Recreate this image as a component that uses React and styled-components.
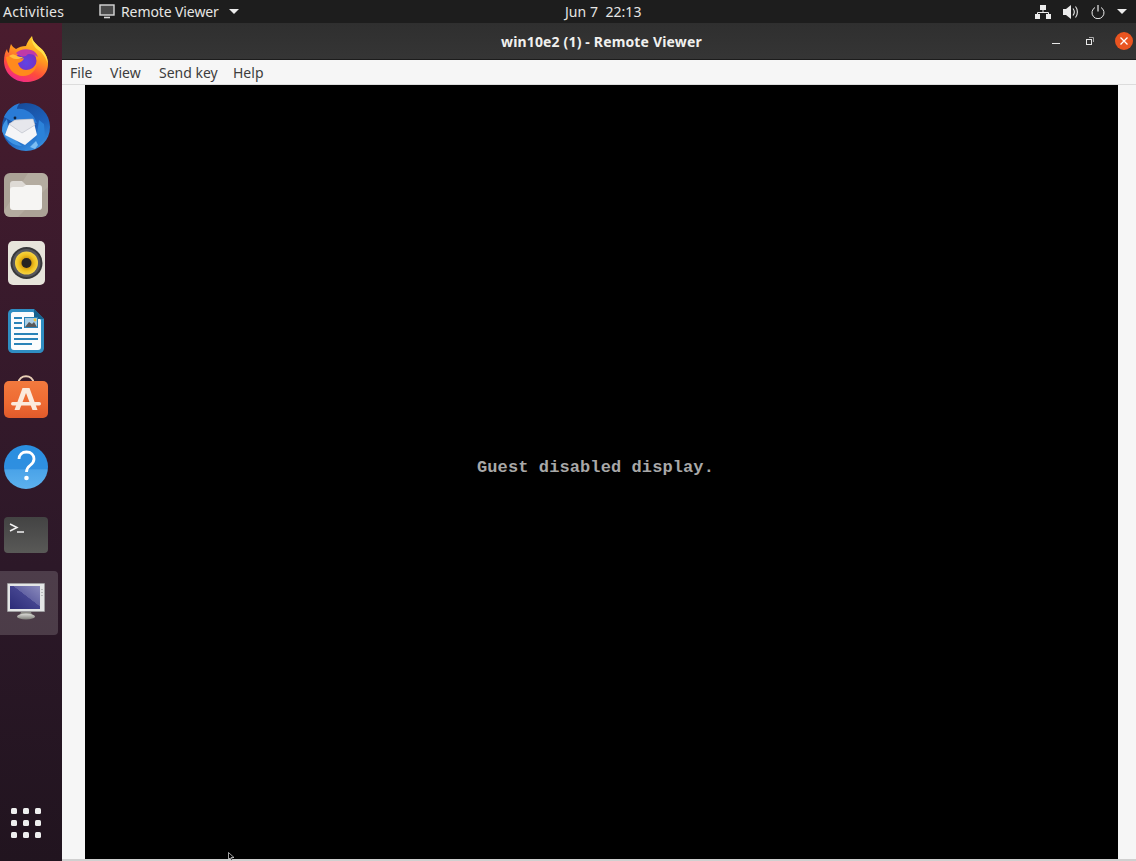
import React from 'react'
import styled, { createGlobalStyle } from 'styled-components'

const Global = createGlobalStyle`
  html, body { margin: 0; padding: 0; background: #000; }
  body { width: 1136px; height: 861px; overflow: hidden; font-family: "Noto Sans", "Open Sans", sans-serif; }
`

const Firefox = () => (
  <svg width="44" height="47" viewBox="0 0 44 47">
    <defs>
      <linearGradient id="ffBody" x1="0.75" y1="0" x2="0.3" y2="1">
        <stop offset="0" stopColor="#ffd52e" />
        <stop offset="0.4" stopColor="#ff9a1f" />
        <stop offset="0.72" stopColor="#ff4a3d" />
        <stop offset="1" stopColor="#f0278f" />
      </linearGradient>
      <radialGradient id="ffGlobe" cx="0.5" cy="0.6" r="0.6">
        <stop offset="0" stopColor="#5f45e4" />
        <stop offset="1" stopColor="#7b2cc0" />
      </radialGradient>
    </defs>
    <path d="M22 47C10 47 0 38 0 26c0-5 1-9 3-12 0 2 1 3 2 4 0-3 1-6 2-9 1 2 3 4 5 5 3-2 6-3 10-3 1-3 3-7 6-10 0 4 2 6 6 10 6 4 10 11 10 18 0 11-10 18-22 18z" fill="url(#ffBody)" />
    <path d="M28 1c0 4 2 6 6 10 6 4 10 11 10 18-2-6-5-11-10-14-4-3-7-8-6-14z" fill="#ffe14a" />
    <circle cx="22" cy="26" r="10.500" fill="url(#ffGlobe)" />
    <path d="M12 18c3-3 9-5 15-3 4 1 6 4 7 7-3-2-6-3-9-3-2 0-2 1-3 2-4 1-7 0-10-3z" fill="#c03aa8" />
    <path d="M2 22c3-1 6-1 9 1 3 1 7 1 9 0-1 3-3 4-6 5 1 4 4 7 8 7 5 0 9-3 11-8 0 8-6 14-14 14-9 0-16-8-17-19z" fill="#ff8a1c" />
    <path d="M5 21c3-2 5-2 8 0 2 1 4 1 6 1-2 2-4 2-7 2-3 0-5-2-7-3z" fill="#ffbe3c" />
  </svg>
)

const Thunderbird = () => (
  <svg width="48" height="48" viewBox="0 0 48 48">
    <defs>
      <linearGradient id="tbBody" x1="0.3" y1="0" x2="0.8" y2="1">
        <stop offset="0" stopColor="#174a98" />
        <stop offset="0.55" stopColor="#1d62bd" />
        <stop offset="1" stopColor="#3a96e6" />
      </linearGradient>
    </defs>
    <circle cx="24" cy="24" r="24" fill="url(#tbBody)" />
    <path d="M2 14C5 7 11 2 18 0c-2 2-3 4-3 6 6-1 13 2 17 8l3 6-26-2z" fill="#2a7bd6" />
    <path d="M0 28c0-5 2-9 5-12 1 5 1 10 1 14l14 13c-8 0-17-6-20-15z" fill="#3f94e4" />
    <path d="M7 21l6-4 18-1 4 16-12 10L3 32z" fill="#f5f5f7" />
    <path d="M7 21l13 9 13-8-2-6-18 1z" fill="#e6e7ec" stroke="#b5b8c4" strokeWidth="0.600" />
    <path d="M37 17l5 4 1 12-6 9-6 3 3-7z" fill="#2b82da" />
    <path d="M28 44l6-6 2 4-3 4z" fill="#7cbdf2" />
    <circle cx="13" cy="15" r="1.400" fill="#10223f" />
  </svg>
)

const Files = () => (
  <svg width="44" height="44" viewBox="0 0 44 44">
    <rect x="0" y="0" width="44" height="44" rx="6" fill="#aba296" />
    <path d="M24 0h14c3 0 6 3 6 6v8L14 44H6c-3 0-6-3-6-6z" fill="#bdb5aa" opacity="0.5" />
    <path d="M6 11c0-2 1-3 3-3h9l5 5v5H6z" fill="#dedad5" />
    <path d="M6 17c0-2 1-3 3-3h10l3-2h13c2 0 3 1 3 3v19c0 2-1 3-3 3H9c-2 0-3-1-3-3z" fill="#f6f5f3" />
  </svg>
)

const Rhythmbox = () => (
  <svg width="37" height="44" viewBox="0 0 37 44">
    <defs>
      <radialGradient id="rbCone" cx="0.5" cy="0.5" r="0.5">
        <stop offset="0.35" stopColor="#c98f10" />
        <stop offset="0.7" stopColor="#f1c21f" />
        <stop offset="1" stopColor="#f6d445" />
      </radialGradient>
    </defs>
    <rect x="0" y="0" width="37" height="44" rx="5" fill="#e7e4db" />
    <circle cx="18.500" cy="22" r="16" fill="#38383a" />
    <circle cx="18.500" cy="22" r="14" fill="#58585c" />
    <circle cx="18.500" cy="22" r="11.500" fill="url(#rbCone)" />
    <circle cx="18.500" cy="22" r="5" fill="#262322" />
  </svg>
)

const Writer = () => (
  <svg width="36" height="44" viewBox="0 0 36 44">
    <path d="M5 0h21l10 10v29c0 3-2 5-5 5H5c-3 0-5-2-5-5V5c0-3 2-5 5-5z" fill="#2f8dc2" />
    <path d="M5 3h20l8 8v27c0 2-1 3-3 3H6c-2 0-3-1-3-3V5c0-1 1-2 2-2z" fill="#fbfcfd" />
    <path d="M26 0l10 10h-10z" fill="#17628f" />
    <path d="M6 8h8v2H6zM6 13h8v2H6zM6 18h8v2H6zM6 24h24v2H6zM6 29h24v2H6zM6 34h18v2H6z" fill="#2a83b8" />
    <rect x="16" y="8" width="14" height="11" fill="#2a83b8" />
    <rect x="17" y="9" width="12" height="9" fill="#a9cfe6" />
    <path d="M17 18l4-5 3 2 2-2 3 5z" fill="#5a5a5a" />
    <circle cx="27" cy="11" r="1.400" fill="#f0c33c" />
  </svg>
)

const Software = () => (
  <svg width="44" height="43" viewBox="0 0 44 43">
    <defs>
      <linearGradient id="swBag" x1="0" y1="0" x2="0" y2="1">
        <stop offset="0" stopColor="#f27a3e" />
        <stop offset="0.6" stopColor="#ee6a32" />
        <stop offset="1" stopColor="#e05a2b" />
      </linearGradient>
    </defs>
    <path d="M14.500 8c0-9 15-9 15 0" fill="none" stroke="#e9cfb6" strokeWidth="1.800" />
    <rect x="0" y="6" width="44" height="37" rx="5" fill="url(#swBag)" />
    <path d="M18.500 13h7l8 22h-5l-6.500-17-6.500 17h-5z" fill="#fbeadd" />
    <rect x="7" y="27" width="30" height="3.500" rx="1.700" fill="#fbeadd" />
  </svg>
)

const Help = () => (
  <svg width="44" height="44" viewBox="0 0 44 44">
    <defs>
      <linearGradient id="hpBall" x1="0" y1="0" x2="0" y2="1">
        <stop offset="0" stopColor="#2a8fe0" />
        <stop offset="0.55" stopColor="#2f8fe0" />
        <stop offset="0.56" stopColor="#4aa3e8" />
        <stop offset="1" stopColor="#5db1ee" />
      </linearGradient>
    </defs>
    <circle cx="22" cy="22" r="22" fill="url(#hpBall)" />
    <path d="M15 14c0-4 3-7 7.500-7S30 10 30 14c0 3-2 5-4 6.500-2 1.500-3.500 3-3.500 6.500" fill="none" stroke="#fff" strokeWidth="2.800" />
    <circle cx="22.500" cy="33" r="2.300" fill="#fff" />
  </svg>
)

const Terminal = () => (
  <svg width="44" height="36" viewBox="0 0 44 36">
    <defs>
      <linearGradient id="tmBg" x1="0" y1="0" x2="0" y2="1">
        <stop offset="0" stopColor="#434343" />
        <stop offset="1" stopColor="#595957" />
      </linearGradient>
    </defs>
    <rect x="0" y="0" width="44" height="36" rx="4" fill="url(#tmBg)" />
    <path d="M6 7l7 3.500-7 3.500" fill="none" stroke="#f2f2f2" strokeWidth="1.500" />
    <path d="M13 15h7" stroke="#f2f2f2" strokeWidth="1.500" />
  </svg>
)

const Monitor = () => (
  <svg width="38" height="37" viewBox="0 0 38 37">
    <defs>
      <linearGradient id="mnScreen" x1="0" y1="1" x2="1" y2="0">
        <stop offset="0" stopColor="#2c2c78" />
        <stop offset="0.55" stopColor="#44448f" />
        <stop offset="0.56" stopColor="#6464a4" />
        <stop offset="1" stopColor="#8a8abc" />
      </linearGradient>
      <linearGradient id="mnBase" x1="0" y1="0" x2="0" y2="1">
        <stop offset="0" stopColor="#dcdcd8" />
        <stop offset="1" stopColor="#7e7e78" />
      </linearGradient>
    </defs>
    <path d="M0.500 0.500h37v28H0.500z" fill="#e4e6e6" stroke="#a2a6a6" strokeWidth="0.600" />
    <rect x="3" y="3" width="30" height="23" fill="url(#mnScreen)" />
    <path d="M35 6v1M35 9v1M35 12v1" stroke="#8e9292" />
    <path d="M14 29h10l1 3H13z" fill="#8a8a84" />
    <ellipse cx="19" cy="33.500" rx="9" ry="3" fill="url(#mnBase)" />
  </svg>
)

const dockItems = [
  { id: 'firefox', Icon: Firefox, lift: 1 },
  { id: 'thunderbird', Icon: Thunderbird },
  { id: 'files', Icon: Files },
  { id: 'rhythmbox', Icon: Rhythmbox },
  { id: 'writer', Icon: Writer },
  { id: 'software', Icon: Software, lift: 3 },
  { id: 'help', Icon: Help },
  { id: 'terminal', Icon: Terminal },
  { id: 'viewer', Icon: Monitor, active: true, lift: 2 },
]

function App() {
  return (
    <>
      <Global />
      <Desktop>
        <TopBar>
          <Activities>Activities</Activities>
          <AppMenu>
            <svg width="16" height="15" viewBox="0 0 16 15">
              <rect x="1" y="1" width="14" height="10" fill="#4a4a4a" stroke="#d8d8d8" strokeWidth="1.400" />
              <path d="M5 13.500h6" stroke="#d8d8d8" strokeWidth="1.600" />
            </svg>
            <span>Remote Viewer</span>
            <Caret $left={4} />
          </AppMenu>
          <Clock>Jun 7&nbsp;&nbsp;22:13</Clock>
          <Tray>
            <svg width="16" height="14" viewBox="0 0 16 14">
              <path d="M5 0h6v5H5zM0 9h5v5H0zM11 9h5v5h-5z" fill="#ececec" />
              <path d="M8 5v2.500M2.500 9V7.500h11V9" fill="none" stroke="#ececec" />
            </svg>
            <svg width="16" height="14" viewBox="0 0 16 14">
              <path d="M0 4h3l5-4v14l-5-4H0z" fill="#ececec" />
              <path d="M10 3.500c1.500 2 1.500 5 0 7M12.500 1.500c2.500 3 2.500 8 0 11" fill="none" stroke="#ececec" strokeWidth="1.100" />
            </svg>
            <svg width="14" height="14" viewBox="0 0 14 14">
              <path d="M7 0v6.500" stroke="#ececec" strokeWidth="1.200" />
              <path d="M4 2.500a6 6 0 1 0 6 0" fill="none" stroke="#ececec" strokeWidth="1" />
            </svg>
            <Caret />
          </Tray>
        </TopBar>
        <Workspace>
          <Dock>
            <DockList>
              {dockItems.map(({ id, Icon, active, lift }) => (
                <DockItem key={id} $active={active} $lift={lift}>
                  <Icon />
                </DockItem>
              ))}
            </DockList>
            <AppGrid>
              {Array.from({ length: 9 }).map((_, i) => <span key={i} />)}
            </AppGrid>
          </Dock>
          <Window>
            <TitleBar>
              <Title>win10e2 (1) - Remote Viewer</Title>
              <WindowButtons>
                <svg width="10" height="10" viewBox="0 0 10 10">
                  <path d="M1 7.500h8" stroke="#e8e8e8" strokeWidth="1" />
                </svg>
                <svg width="10" height="10" viewBox="0 0 10 10">
                  <rect x="1.500" y="3.500" width="5" height="5" fill="none" stroke="#e8e8e8" />
                  <path d="M4 1.500h4.500V6" fill="none" stroke="#a8a8a8" />
                </svg>
                <CloseButton>
                  <svg width="10" height="10" viewBox="0 0 10 10">
                    <path d="M1.500 1.500l7 7M8.500 1.500l-7 7" stroke="#fff" strokeWidth="1.300" />
                  </svg>
                </CloseButton>
              </WindowButtons>
            </TitleBar>
            <MenuBar>
              <MenuItem $w={40}>File</MenuItem>
              <MenuItem $w={49}>View</MenuItem>
              <MenuItem $w={74}>Send key</MenuItem>
              <MenuItem>Help</MenuItem>
            </MenuBar>
            <Content>
              <Display>
                <GuestText>Guest disabled display.</GuestText>
                <Cursor width="7" height="9" viewBox="0 0 7 9">
                  <path d="M0.500 0.500v7l1.500-1.500 1.500 2.500 1-0.700-1.300-2.300H6z" fill="#000" stroke="#e8e8e8" strokeWidth="0.700" />
                </Cursor>
              </Display>
            </Content>
          </Window>
        </Workspace>
      </Desktop>
    </>
  )
}

export default App

const Desktop = styled.div`
  width: 1136px;
  height: 861px;
  display: flex;
  flex-direction: column;
  overflow: hidden;
`

const TopBar = styled.div`
  height: 23px;
  flex: none;
  background: #1d1d1d;
  color: #e6e6e4;
  font-size: 14px;
  display: flex;
  align-items: center;
  padding: 0 9px 0 3px;
`

const Activities = styled.div`
  width: 96px;
  letter-spacing: 0.3px;
`

const AppMenu = styled.div`
  display: flex;
  align-items: center;
  gap: 6px;
  width: 466px;
  letter-spacing: -0.1px;
`

const Caret = styled.i`
  display: block;
  width: 0;
  height: 0;
  margin-left: ${(p) => p.$left || 0}px;
  border-left: 5px solid transparent;
  border-right: 5px solid transparent;
  border-top: 5px solid #ececec;
`

const Clock = styled.div`
  flex: 1;
  letter-spacing: 0.05px;
`

const Tray = styled.div`
  display: flex;
  align-items: center;
  gap: 12px;
`

const Workspace = styled.div`
  flex: 1;
  display: flex;
  min-height: 0;
`

const Dock = styled.nav`
  width: 62px;
  flex: none;
  display: flex;
  flex-direction: column;
  justify-content: space-between;
  background: linear-gradient(180deg, #4a1c2e 0%, #3a1a2c 30%, #2c1828 65%, #21141f 100%);
`

const DockList = styled.div`
  display: flex;
  flex-direction: column;
  padding-top: 2px;
`

const DockItem = styled.div`
  width: 58px;
  height: ${(p) => (p.$active ? '64px' : '68px')};
  margin-top: ${(p) => (p.$active ? '2px' : '0')};
  display: flex;
  align-items: center;
  justify-content: center;
  padding-right: 6px;
  padding-bottom: ${(p) => (p.$lift || 0) * 2}px;
  box-sizing: border-box;
  border-radius: 0 4px 4px 0;
  background: ${(p) => (p.$active ? 'rgba(255, 255, 255, 0.16)' : 'transparent')};
`

const AppGrid = styled.div`
  display: grid;
  grid-template-columns: repeat(3, 6px);
  grid-auto-rows: 6px;
  gap: 6px;
  padding: 0 0 23px 11px;

  span {
    background: #efefef;
    border-radius: 1.500px;
  }
`

const Window = styled.main`
  flex: 1;
  display: flex;
  flex-direction: column;
  min-width: 0;
  background: #f6f6f6;
  border-bottom: 2px solid #d0d0d0;
`

const TitleBar = styled.header`
  height: 36px;
  flex: none;
  display: flex;
  align-items: center;
  padding: 0 3px 0 439px;
  background: linear-gradient(180deg, #2f2f2f, #353535);
  border-bottom: 1px solid #1c1c1c;
`

const Title = styled.div`
  margin-right: auto;
  color: #f0f0ee;
  font-size: 14px;
  font-weight: 700;
  letter-spacing: 0.16px;
  white-space: nowrap;
`

const WindowButtons = styled.div`
  display: flex;
  align-items: center;
  gap: 24px;
`

const CloseButton = styled.div`
  width: 18px;
  height: 18px;
  margin-left: -4px;
  border-radius: 50%;
  background: #e95420;
  display: flex;
  align-items: center;
  justify-content: center;
`

const MenuBar = styled.div`
  height: 25px;
  flex: none;
  display: flex;
  align-items: center;
  padding-left: 8px;
  box-sizing: border-box;
  border-bottom: 1px solid #dcdcdc;
  color: #3d3d3d;
  font-size: 14px;
`

const MenuItem = styled.span`
  display: block;
  width: ${(p) => (p.$w ? `${p.$w}px` : 'auto')};
`

const Content = styled.div`
  flex: 1;
  display: flex;
  padding: 0 18px 0 23px;
  min-height: 0;
`

const Display = styled.div`
  flex: 1;
  position: relative;
  background: #000;
  display: flex;
  justify-content: center;
  padding: 371px 12px 0 0;
  box-sizing: border-box;
`

const GuestText = styled.div`
  color: #a8a8a8;
  font-family: "Liberation Mono", "DejaVu Sans Mono", monospace;
  font-size: 17px;
  font-weight: 700;
  letter-spacing: 0.1px;
  line-height: 24px;
  height: 24px;
  white-space: nowrap;
`

const Cursor = styled.svg`
  position: absolute;
  left: 143px;
  bottom: -2px;
`
